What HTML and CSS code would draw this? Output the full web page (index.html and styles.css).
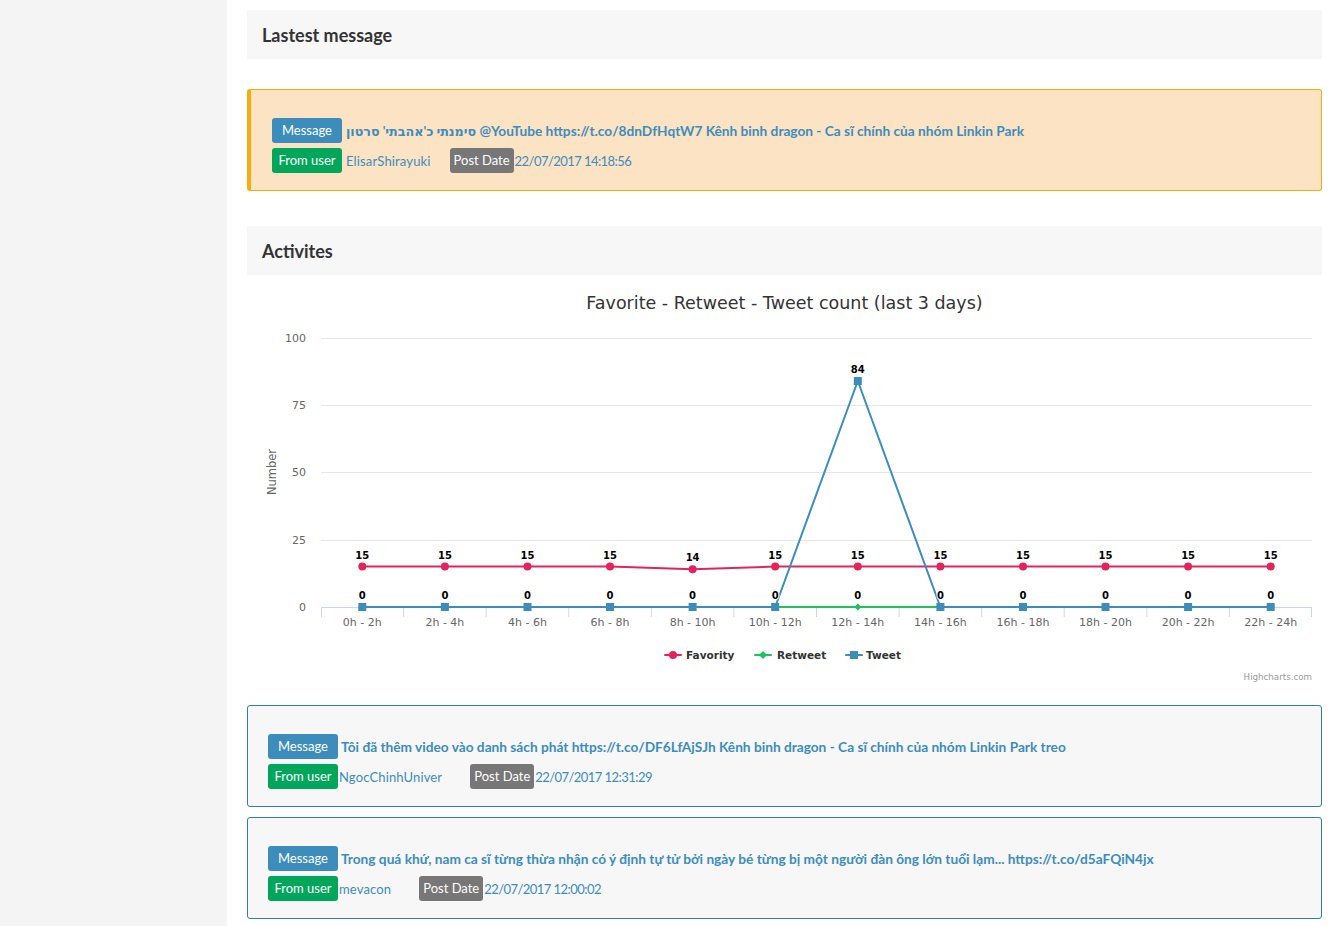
FILE: index.html
```html
<!DOCTYPE html>
<html lang="vi">
<head>
<meta charset="utf-8">
<title>Dashboard</title>
<link rel="stylesheet" href="styles.css">
</head>
<body>
<div class="layout">
  <aside class="sidebar"></aside>
  <main class="content">
    <div class="box-header"><h3 class="box-title">Lastest message</h3></div>

    <div class="msg msg-alert">
      <div class="row">
        <span class="tag tag-primary">Message</span>
        <span class="text"><bdi class="he">סימנתי כ'אהבתי' סרטון</bdi> @YouTube https://t.co/8dnDfHqtW7 Kênh binh dragon - Ca sĩ chính của nhóm Linkin Park</span>
      </div>
      <div class="row">
        <span class="tag tag-success">From user</span>
        <span class="val user">ElisarShirayuki</span>
        <span class="tag tag-muted">Post Date</span>
        <span class="val date">22/07/2017 14:18:56</span>
      </div>
    </div>

    <div class="box-header"><h3 class="box-title">Activites</h3></div>

    <div class="chart">
      <svg class="chart-svg" width="1075" height="420" viewBox="0 0 1075 420" xmlns="http://www.w3.org/2000/svg">
        <text class="c-title" x="537.5" y="34" text-anchor="middle">Favorite - Retweet - Tweet count (last 3 days)</text>

        <g class="grid">
          <line x1="74" y1="63.5" x2="1065" y2="63.5"/>
          <line x1="74" y1="130.5" x2="1065" y2="130.5"/>
          <line x1="74" y1="197.5" x2="1065" y2="197.5"/>
          <line x1="74" y1="265.5" x2="1065" y2="265.5"/>
        </g>
        <g class="ylabels" text-anchor="end">
          <text x="59" y="67">100</text>
          <text x="59" y="134">75</text>
          <text x="59" y="201">50</text>
          <text x="59" y="269">25</text>
          <text x="59" y="336">0</text>
        </g>
        <text class="ytitle" transform="translate(29,197) rotate(-90)" text-anchor="middle">Number</text>

        <g class="axis">
          <line x1="74" y1="332.5" x2="1065" y2="332.5"/>
          <line x1="74.5" y1="332" x2="74.5" y2="342"/>
          <line x1="156.6" y1="332" x2="156.6" y2="342"/>
          <line x1="239.2" y1="332" x2="239.2" y2="342"/>
          <line x1="321.8" y1="332" x2="321.8" y2="342"/>
          <line x1="404.3" y1="332" x2="404.3" y2="342"/>
          <line x1="486.9" y1="332" x2="486.9" y2="342"/>
          <line x1="569.5" y1="332" x2="569.5" y2="342"/>
          <line x1="652.1" y1="332" x2="652.1" y2="342"/>
          <line x1="734.7" y1="332" x2="734.7" y2="342"/>
          <line x1="817.2" y1="332" x2="817.2" y2="342"/>
          <line x1="899.8" y1="332" x2="899.8" y2="342"/>
          <line x1="982.4" y1="332" x2="982.4" y2="342"/>
          <line x1="1064.5" y1="332" x2="1064.5" y2="342"/>
        </g>
        <g class="xlabels" text-anchor="middle">
          <text x="115.3" y="351">0h - 2h</text>
          <text x="197.9" y="351">2h - 4h</text>
          <text x="280.5" y="351">4h - 6h</text>
          <text x="363.0" y="351">6h - 8h</text>
          <text x="445.6" y="351">8h - 10h</text>
          <text x="528.2" y="351">10h - 12h</text>
          <text x="610.8" y="351">12h - 14h</text>
          <text x="693.4" y="351">14h - 16h</text>
          <text x="776.0" y="351">16h - 18h</text>
          <text x="858.5" y="351">18h - 20h</text>
          <text x="941.1" y="351">20h - 22h</text>
          <text x="1023.7" y="351">22h - 24h</text>
        </g>

        <!-- Favority -->
        <polyline class="s-fav" points="115.3,291.6 197.9,291.6 280.5,291.6 363.0,291.6 445.6,294.3 528.2,291.6 610.8,291.6 693.4,291.6 776.0,291.6 858.5,291.6 941.1,291.6 1023.7,291.6"/>
        <g class="m-fav">
          <circle cx="115.3" cy="291.6" r="4"/><circle cx="197.9" cy="291.6" r="4"/><circle cx="280.5" cy="291.6" r="4"/>
          <circle cx="363.0" cy="291.6" r="4"/><circle cx="445.6" cy="294.3" r="4"/><circle cx="528.2" cy="291.6" r="4"/>
          <circle cx="610.8" cy="291.6" r="4"/><circle cx="693.4" cy="291.6" r="4"/><circle cx="776.0" cy="291.6" r="4"/>
          <circle cx="858.5" cy="291.6" r="4"/><circle cx="941.1" cy="291.6" r="4"/><circle cx="1023.7" cy="291.6" r="4"/>
        </g>

        <!-- Retweet -->
        <polyline class="s-rt" points="115.3,332 197.9,332 280.5,332 363.0,332 445.6,332 528.2,332 610.8,332 693.4,332 776.0,332 858.5,332 941.1,332 1023.7,332"/>
        <g class="m-rt">
          <path d="M115.3 328 L119.3 332 L115.3 336 L111.3 332 Z"/>
          <path d="M197.9 328 L201.9 332 L197.9 336 L193.9 332 Z"/>
          <path d="M280.5 328 L284.5 332 L280.5 336 L276.5 332 Z"/>
          <path d="M363.0 328 L367.0 332 L363.0 336 L359.0 332 Z"/>
          <path d="M445.6 328 L449.6 332 L445.6 336 L441.6 332 Z"/>
          <path d="M528.2 328 L532.2 332 L528.2 336 L524.2 332 Z"/>
          <path d="M610.8 328.5 L614.3 332 L610.8 335.5 L607.3 332 Z"/>
          <path d="M693.4 328 L697.4 332 L693.4 336 L689.4 332 Z"/>
          <path d="M776.0 328 L780.0 332 L776.0 336 L772.0 332 Z"/>
          <path d="M858.5 328 L862.5 332 L858.5 336 L854.5 332 Z"/>
          <path d="M941.1 328 L945.1 332 L941.1 336 L937.1 332 Z"/>
          <path d="M1023.7 328 L1027.7 332 L1023.7 336 L1019.7 332 Z"/>
        </g>

        <!-- Tweet -->
        <polyline class="s-tw" points="115.3,332 197.9,332 280.5,332 363.0,332 445.6,332 528.2,332 610.8,106 693.4,332 776.0,332 858.5,332 941.1,332 1023.7,332"/>
        <g class="m-tw">
          <rect x="111.3" y="328" width="8" height="8"/><rect x="193.9" y="328" width="8" height="8"/>
          <rect x="276.5" y="328" width="8" height="8"/><rect x="359.0" y="328" width="8" height="8"/>
          <rect x="441.6" y="328" width="8" height="8"/><rect x="524.2" y="328" width="8" height="8"/>
          <rect x="606.8" y="102" width="8" height="8"/><rect x="689.4" y="328" width="8" height="8"/>
          <rect x="772.0" y="328" width="8" height="8"/><rect x="854.5" y="328" width="8" height="8"/>
          <rect x="937.1" y="328" width="8" height="8"/><rect x="1019.7" y="328" width="8" height="8"/>
        </g>

        <g class="dlabels" text-anchor="middle">
          <text x="115.3" y="284">15</text><text x="197.9" y="284">15</text><text x="280.5" y="284">15</text>
          <text x="363.0" y="284">15</text><text x="445.6" y="286">14</text><text x="528.2" y="284">15</text>
          <text x="610.8" y="284">15</text><text x="693.4" y="284">15</text><text x="776.0" y="284">15</text>
          <text x="858.5" y="284">15</text><text x="941.1" y="284">15</text><text x="1023.7" y="284">15</text>

          <text x="115.3" y="324">0</text><text x="197.9" y="324">0</text><text x="280.5" y="324">0</text>
          <text x="363.0" y="324">0</text><text x="445.6" y="324">0</text><text x="528.2" y="324">0</text>
          <text x="610.8" y="324">0</text><text x="693.4" y="324">0</text><text x="776.0" y="324">0</text>
          <text x="858.5" y="324">0</text><text x="941.1" y="324">0</text><text x="1023.7" y="324">0</text>
          <text x="610.8" y="98">84</text>
        </g>

        <g class="legend">
          <line class="s-fav" x1="418" y1="380" x2="434" y2="380"/>
          <circle class="m-fav-one" cx="426" cy="380" r="4"/>
          <text x="439" y="384">Favority</text>

          <line class="s-rt" x1="508" y1="380" x2="524" y2="380"/>
          <path class="m-rt-one" d="M516 376 L520 380 L516 384 L512 380 Z"/>
          <text x="530" y="384">Retweet</text>

          <line class="s-tw" x1="599" y1="380" x2="615" y2="380"/>
          <rect class="m-tw-one" x="603" y="376" width="8" height="8"/>
          <text x="619" y="384">Tweet</text>
        </g>

        <text class="credits" x="1065" y="405" text-anchor="end">Highcharts.com</text>
      </svg>
    </div>

    <div class="msg msg-card">
      <div class="row">
        <span class="tag tag-primary">Message</span>
        <span class="text">Tôi đã thêm video vào danh sách phát https://t.co/DF6LfAjSJh Kênh binh dragon - Ca sĩ chính của nhóm Linkin Park treo</span>
      </div>
      <div class="row">
        <span class="tag tag-success">From user</span>
        <span class="val user">NgocChinhUniver</span>
        <span class="tag tag-muted">Post Date</span>
        <span class="val date">22/07/2017 12:31:29</span>
      </div>
    </div>

    <div class="msg msg-card">
      <div class="row">
        <span class="tag tag-primary">Message</span>
        <span class="text">Trong quá khứ, nam ca sĩ từng thừa nhận có ý định tự tử bởi ngày bé từng bị một người đàn ông lớn tuổi lạm... https://t.co/d5aFQiN4jx</span>
      </div>
      <div class="row">
        <span class="tag tag-success">From user</span>
        <span class="val user">mevacon</span>
        <span class="tag tag-muted">Post Date</span>
        <span class="val date">22/07/2017 12:00:02</span>
      </div>
    </div>
  </main>
</div>
</body>
</html>
```

FILE: styles.css
```css
* { box-sizing: border-box; }

body {
  margin: 0;
  font-family: Lato, "Noto Sans", "DejaVu Sans", sans-serif;
  color: #333;
  background: #fff;
}

.layout {
  display: flex;
  min-height: 926px;
}

.sidebar {
  width: 227px;
  flex: none;
  background: #f4f4f4;
}

.content {
  flex: 1;
  min-width: 0;
  padding: 10px 18px 0 20px;
}

.box-header {
  height: 49px;
  background: #f7f7f7;
  display: flex;
  align-items: center;
  padding-left: 15px;
}

.box-title {
  margin: 0;
  font-size: 18px;
  font-weight: 700;
  color: #333;
}

.msg {
  display: flex;
  flex-direction: column;
  gap: 5px;
  padding: 28px 20px 17px 20px;
  border-radius: 3px;
}

.msg-alert {
  margin: 30px 0 35px;
  background: #fce3c4;
  border: 1px solid #f6ad0c;
  border-left-width: 4px;
  padding-left: 21px;
}

.msg-card {
  margin-top: 10px;
  background: #f7f7f7;
  border: 1px solid #2d7fa8;
  padding-left: 20px;
}

.row {
  display: flex;
  align-items: center;
  height: 25px;
  white-space: nowrap;
}

.tag {
  display: inline-block;
  height: 25px;
  line-height: 25px;
  border-radius: 3px;
  color: #fff;
  font-size: 13px;
  min-width: 70px;
  padding: 0 6px;
  text-align: center;
}

.tag-primary { background: #3c8dbc; }
.tag-success { background: #00a65a; }
.tag-muted { background: #777; min-width: 64px; padding: 0 3px; }

.text {
  color: #3c8dbc;
  font-weight: 700;
  font-size: 13.7px;
  margin-left: 3px;
}

.he { font-size: 12.7px; }

.val {
  color: #3c8dbc;
  font-size: 13px;
}

.user { margin-left: 1px; margin-right: 28px; letter-spacing: 0.15px; }
.date { margin-left: 1px; letter-spacing: -0.55px; }

.msg-alert .text { margin-left: 4px; }
.msg-alert .user { margin-left: 4px; margin-right: 19px; }

/* chart */
.chart {
  height: 420px;
}

.chart-svg {
  display: block;
  font-family: "DejaVu Sans", sans-serif;
}

.c-title { font-size: 17.5px; fill: #333; }

.grid line { stroke: #e6e6e6; stroke-width: 1; }
.axis line { stroke: #ccd6eb; stroke-width: 1; }

.ylabels text, .xlabels text { font-size: 11px; fill: #666; }
.ytitle { font-size: 11.5px; fill: #666; }

.s-fav, .s-rt, .s-tw { fill: none; stroke-width: 2; stroke-linejoin: round; stroke-linecap: round; }
.s-fav { stroke: #e2245c; }
.s-rt { stroke: #1fc35d; }
.s-tw { stroke: #3c8dbc; }

.m-fav circle, .m-fav-one { fill: #e2245c; }
.m-rt path, .m-rt-one { fill: #1fc35d; }
.m-tw rect, .m-tw-one { fill: #3c8dbc; }

.dlabels text {
  font-size: 10px;
  font-weight: 700;
  fill: #000;
  stroke: #fff;
  stroke-width: 2px;
  stroke-linejoin: round;
  paint-order: stroke;
}

.legend text { font-size: 10.5px; font-weight: 700; fill: #333; }

.credits { font-size: 8.7px; fill: #999; }
```
